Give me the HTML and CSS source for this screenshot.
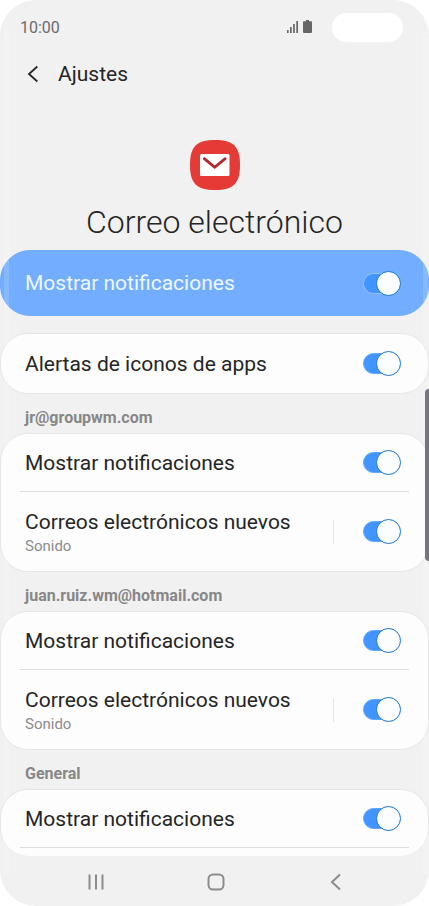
FILE: index.html
```html
<!DOCTYPE html>
<html lang="es">
<head>
<meta charset="utf-8">
<meta name="viewport" content="width=device-width, initial-scale=1">
<title>Correo electrónico</title>
<link rel="stylesheet" href="styles.css">
</head>
<body>
<div class="screen">
  <div class="status">
    <span>10:00</span>
    <div class="status-right">
      <svg class="status-icons" width="26" height="14" viewBox="0 0 26 14" fill="#666" aria-hidden="true">
        <path d="M0 10h1.6v3H0zM3 7h1.7v6H3zM6.1 4h1.7v9H6.1zM9.3 1h1.7v12H9.3z"/>
        <path d="M19 0h3v1.3h2.2a.8.8 0 0 1 .8.8V12a1 1 0 0 1-1 1h-7a1 1 0 0 1-1-1V2.100a.8.8 0 0 1 .8-.8H19z"/>
      </svg>
      <span class="cutout"></span>
    </div>
  </div>
  <header class="header">
    <button class="icon-button" type="button" aria-label="Atrás">
      <svg width="12" height="18" viewBox="0 0 12 18" fill="none" stroke="#252525" stroke-width="1.8"><path d="M10.300 1.500 2 9l8.300 7.500"/></svg>
    </button>
    <span>Ajustes</span>
  </header>
  <main class="content">
    <div class="hero">
      <svg width="50" height="50" viewBox="0 0 50 50" aria-hidden="true">
        <path d="M25 0C43.500 0 50 6.500 50 25S43.500 50 25 50 0 43.500 0 25 6.500 0 25 0z" fill="#e53b36"/>
        <rect x="10" y="14" width="29.500" height="22" rx="1.500" fill="#fff"/>
        <path d="M14.300 18.700 24.700 27.300 35.200 18.700" fill="none" stroke="#b0272d" stroke-width="2.800" stroke-linecap="round"/>
      </svg>
      <h1 class="title">Correo electrónico</h1>
    </div>
    <section class="card card-main">
      <div class="row row-main">
        <label class="name" for="t1">Mostrar notificaciones</label>
        <input class="toggle" id="t1" type="checkbox" checked>
      </div>
    </section>
    <section class="card">
      <div class="row row-single">
        <label class="name" for="t2">Alertas de iconos de apps</label>
        <input class="toggle" id="t2" type="checkbox" checked>
      </div>
    </section>
    <h2 class="group">jr@groupwm.com</h2>
    <section class="card">
      <div class="row">
        <label class="name" for="t3">Mostrar notificaciones</label>
        <input class="toggle" id="t3" type="checkbox" checked>
      </div>
      <hr class="line">
      <div class="row row-detail">
        <label class="name" for="t4">Correos electrónicos nuevos<span class="sub">Sonido</span></label>
        <span class="split"></span>
        <input class="toggle" id="t4" type="checkbox" checked>
      </div>
    </section>
    <h2 class="group">juan.ruiz.wm@hotmail.com</h2>
    <section class="card">
      <div class="row">
        <label class="name" for="t5">Mostrar notificaciones</label>
        <input class="toggle" id="t5" type="checkbox" checked>
      </div>
      <hr class="line">
      <div class="row row-detail">
        <label class="name" for="t6">Correos electrónicos nuevos<span class="sub">Sonido</span></label>
        <span class="split"></span>
        <input class="toggle" id="t6" type="checkbox" checked>
      </div>
    </section>
    <h2 class="group">General</h2>
    <section class="card card-last">
      <div class="row">
        <label class="name" for="t7">Mostrar notificaciones</label>
        <input class="toggle" id="t7" type="checkbox" checked>
      </div>
      <hr class="line">
    </section>
  </main>
  <nav class="nav">
    <button class="icon-button" type="button" aria-label="Recientes">
      <svg width="18" height="18" viewBox="0 0 18 18" stroke="#8c8c8c" stroke-width="2"><path d="M2.500 1.500v15M9 1.500v15M15.500 1.500v15"/></svg>
    </button>
    <button class="icon-button" type="button" aria-label="Inicio">
      <svg width="18" height="18" viewBox="0 0 18 18" fill="none" stroke="#8c8c8c" stroke-width="2"><rect x="1.500" y="1.500" width="15" height="15" rx="4.500"/></svg>
    </button>
    <button class="icon-button" type="button" aria-label="Volver">
      <svg width="18" height="18" viewBox="0 0 18 18" fill="none" stroke="#8c8c8c" stroke-width="2"><path d="M13 1.500 5 9l8 7.500"/></svg>
    </button>
  </nav>
  <span class="side-handle"></span>
</div>
</body>
</html>
```
FILE: styles.css
```css
* {
  box-sizing: border-box;
}

body {
  margin: 0;
  background: #fff;
  color: #252525;
  font-family: Roboto, sans-serif;
}

.screen {
  position: relative;
  display: flex;
  flex-direction: column;
  min-height: 100vh;
  overflow: hidden;
  border-radius: 36px;
  background: #f1f1f1;
}

/* light reflections along both curved edges */
.screen::before,
.screen::after {
  content: "";
  position: absolute;
  top: 32px;
  bottom: 32px;
  width: 5px;
  background: rgba(255, 255, 255, 0.15);
  pointer-events: none;
}

.screen::before {
  left: 4px;
}

.screen::after {
  right: 1px;
}

.status {
  display: flex;
  align-items: center;
  justify-content: space-between;
  height: 54px;
  padding: 0 26px 0 20px;
  color: #6b6b6b;
  font-size: 16px;
}

.status-right {
  display: flex;
  align-items: center;
  gap: 19px;
}

.cutout {
  width: 71px;
  height: 29px;
  border-radius: 15px;
  background: #fff;
}

.header {
  display: flex;
  align-items: center;
  gap: 19px;
  height: 40px;
  padding-left: 27px;
  font-size: 21px;
}

.icon-button {
  display: flex;
  padding: 0;
  border: 0;
  background: none;
}

.content {
  flex: 1;
}

.hero {
  display: flex;
  flex-direction: column;
  align-items: center;
  gap: 11px;
  padding: 46px 0 7px;
}

.title {
  margin: 0;
  font-size: 32px;
  font-weight: 300;
  line-height: 42px;
}

.card {
  border: 1px solid #e6e6e6;
  border-radius: 28px;
  background: #fdfdfd;
}

.card-main {
  margin-bottom: 17px;
  border-color: #72adff;
  border-radius: 30px;
  background: #72adff;
  color: #eef8ff;
}

.card-last {
  padding-bottom: 8px;
  border-bottom: 0;
}

.row {
  display: flex;
  align-items: center;
  height: 57px;
  padding: 0 27px 0 24px;
}

.row-main {
  height: 64px;
}

.row-single {
  height: 59px;
}

.row-detail {
  height: 79px;
}

.name {
  flex: 1;
  font-size: 21px;
  line-height: 28px;
}

.sub {
  display: block;
  color: #8c8c8c;
  font-size: 15px;
  line-height: 20px;
}

.split {
  width: 1px;
  height: 24px;
  margin-right: 29px;
  background: #e4e4e4;
}

.line {
  height: 1px;
  margin: 0 19px;
  border: 0;
  background: #dedede;
}

.group {
  margin: 0;
  padding: 9px 25px 0;
  color: #878787;
  font-size: 16px;
  font-weight: 700;
  line-height: 30px;
}

.toggle {
  position: relative;
  display: flex;
  align-items: center;
  justify-content: flex-end;
  width: 38px;
  height: 23px;
  margin: 0;
  appearance: none;
}

.toggle::before {
  content: "";
  position: absolute;
  inset: 1px 2px 1px 0;
  border: 1px solid #60a7ff;
  border-radius: 11px;
  background: #4295ff;
}

.card-main .toggle::before {
  border-color: #91c3ff;
}

.toggle::after {
  content: "";
  position: relative;
  width: 23px;
  height: 23px;
  border: 1px solid #1675d1;
  border-radius: 50%;
  background: #fcfdff;
}

.nav {
  display: flex;
  align-items: center;
  justify-content: space-between;
  height: 50px;
  padding: 2px 84px 0 87px;
}

.side-handle {
  position: absolute;
  top: 389px;
  right: 0;
  z-index: 1;
  width: 4px;
  height: 172px;
  border-radius: 4px 0 0 4px;
  background: #777482;
}
```
